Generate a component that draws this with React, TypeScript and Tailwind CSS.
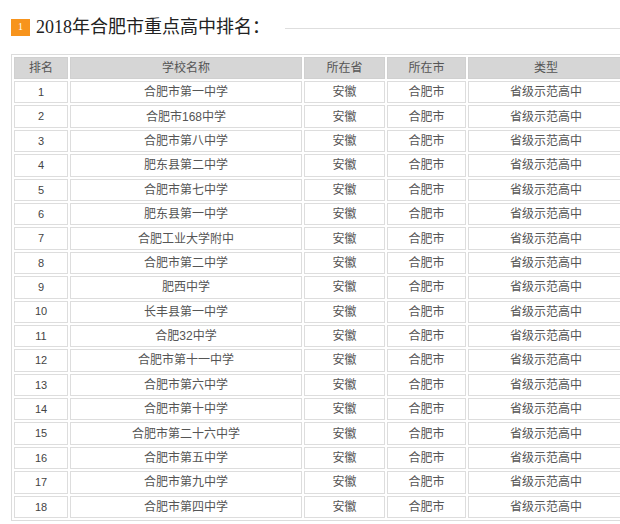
const rows: Array<[number, string]> = [
  [1, "合肥市第一中学"],
  [2, "合肥市168中学"],
  [3, "合肥市第八中学"],
  [4, "肥东县第二中学"],
  [5, "合肥市第七中学"],
  [6, "肥东县第一中学"],
  [7, "合肥工业大学附中"],
  [8, "合肥市第二中学"],
  [9, "肥西中学"],
  [10, "长丰县第一中学"],
  [11, "合肥32中学"],
  [12, "合肥市第十一中学"],
  [13, "合肥市第六中学"],
  [14, "合肥市第十中学"],
  [15, "合肥市第二十六中学"],
  [16, "合肥市第五中学"],
  [17, "合肥市第九中学"],
  [18, "合肥市第四中学"],
];

const cols = [
  { name: "排名", w: "w-[54px]" },
  { name: "学校名称", w: "w-[232px]" },
  { name: "所在省", w: "w-[81px]" },
  { name: "所在市", w: "w-[79px]" },
  { name: "类型", w: "w-[156px]" },
];

export default function App() {
  return (
    <div
      className="h-[524px] w-[620px] overflow-hidden bg-white"
      style={{ fontFamily: '"Liberation Sans", "Noto Sans CJK SC", sans-serif' }}
    >
      {/* 标题 */}
      <div className="flex items-center pl-[11px] pt-[18px]">
        <span className="flex h-[17px] w-[19px] items-center justify-center bg-[#f7941d] font-['Liberation_Serif'] text-[10px] leading-none text-white">
          1
        </span>
        <h2 className="ml-[6px] font-['Liberation_Serif','Noto_Sans_CJK_SC',serif] text-[18px] leading-[18px] text-[#222]">
          2018年合肥市重点高中排名：
        </h2>
        <div className="ml-[15px] mt-[3px] h-px flex-1 bg-[#dedede]" />
      </div>

      <table className="ml-[11px] mt-[18px] w-[616px] table-fixed border-separate border-spacing-[2px] border border-[#dcdcdc] text-center text-[12px] text-[#555]">
        <thead>
          <tr>
            {cols.map((c) => (
              <th key={c.name} className={`${c.w} h-[22px] border border-[#d0d0d0] bg-[#d6d6d6] p-0 font-normal text-[#555]`}>
                {c.name}
              </th>
            ))}
          </tr>
        </thead>
        <tbody>
          {rows.map(([n, school]) => (
            <tr key={n}>
              <td className="h-[22.4px] border border-[#dddddd] p-0 text-[11px] text-[#444]">{n}</td>
              <td className="border border-[#dddddd] p-0">{school}</td>
              <td className="border border-[#dddddd] p-0">安徽</td>
              <td className="border border-[#dddddd] p-0">合肥市</td>
              <td className="border border-[#dddddd] p-0">省级示范高中</td>
            </tr>
          ))}
        </tbody>
      </table>
    </div>
  );
}
